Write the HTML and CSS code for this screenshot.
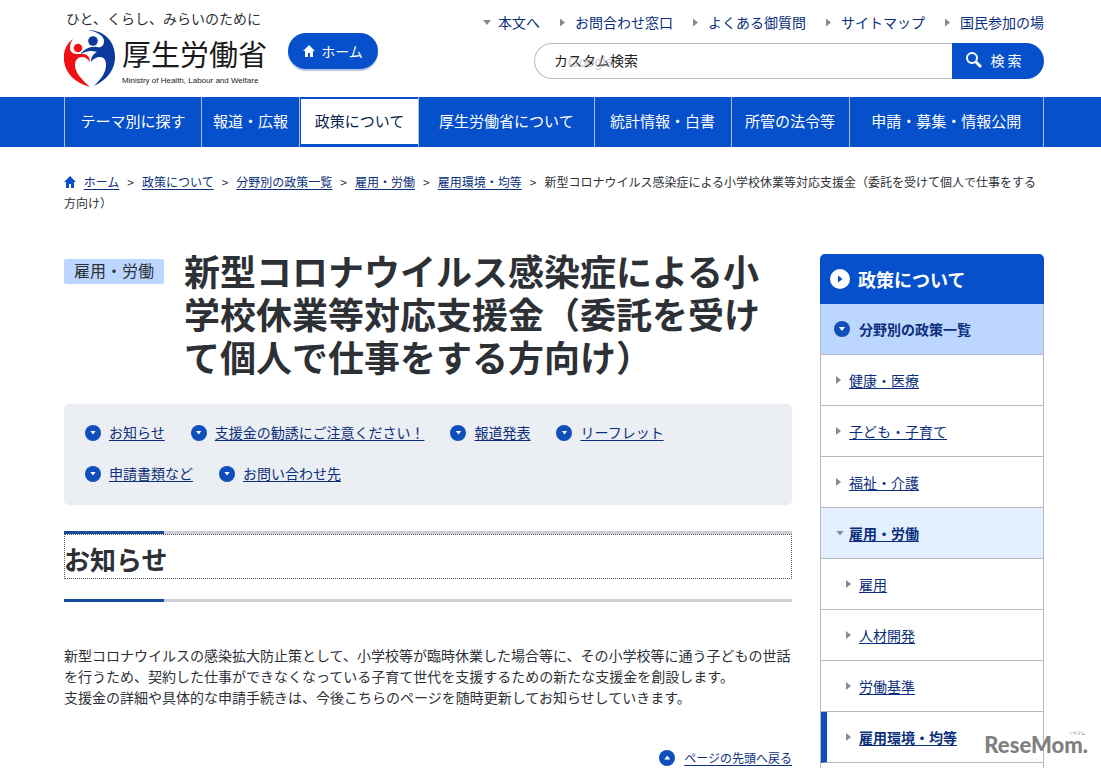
FILE: index.html
```html
<!DOCTYPE html>
<html lang="ja">
<head>
	<meta charset="utf-8">
	<meta name="viewport" content="width=device-width, initial-scale=1">
	<title>新型コロナウイルス感染症による小学校休業等対応支援金｜厚生労働省</title>

	<link rel="stylesheet" href="styles.css">
</head>
<body>
	<header class="header">
		<div class="brand">
			<p class="tagline">ひと、くらし、みらいのために</p>
			<a class="logo" href="#">
				<svg class="logo-mark" viewBox="0 0 52 58" aria-hidden="true">
					<circle cx="14" cy="18" r="4.3" fill="#f00f14"/>
					<path fill="#f00f14" d="M9 9C2 14-1 22 0 31c2 13 10 21 26 26C17 49 11 42 11 35c0-5 3-8 7-8 3 0 6 2 8 5 0-5-3-8-7-8h-5c-5 0-8-2-8-6 0-4 1-6 3-9z"/>
					<circle cx="29" cy="11" r="4.8" fill="#0a3a9c"/>
					<path fill="#0a3a9c" d="M24 0C38 0 50 9 51 25c1 14-8 25-21 31 8-8 12-14 12-21 0-5-2-8-6-8-4 0-7 2-9 5 0-5 2-8 6-10-6-2-12-1-17 3 4-6 10-9 17-8 4 1 7-1 7-6 0-5-6-9-16-11z"/>
				</svg>
				<span class="logo-text">
					<span class="logo-name">厚生労働省</span>
					<span class="logo-en">Ministry of Health, Labour and Welfare</span>
				</span>
			</a>
		</div>
		<a class="home-button" href="#">
			<svg class="icon-home" viewBox="0 0 12 12" aria-hidden="true"><path fill="currentColor" d="M6 0 0 6h2v6h3V8h2v4h3V6h2z"/></svg>
			ホーム
		</a>
		<div class="header-side">
			<ul class="utility">
				<li><a class="arrow-down" href="#main">本文へ</a></li>
				<li><a class="arrow" href="#">お問合わせ窓口</a></li>
				<li><a class="arrow" href="#">よくある御質問</a></li>
				<li><a class="arrow" href="#">サイトマップ</a></li>
				<li><a class="arrow" href="#">国民参加の場</a></li>
			</ul>
			<form class="search">
				<div class="search-field">
					<input type="text" value="カスタム検索" aria-label="カスタム検索">
					<span class="search-provider" aria-hidden="true">Google</span>
				</div>
				<button type="button">
					<svg class="icon-search" viewBox="0 0 16 16" aria-hidden="true"><circle cx="6" cy="6" r="5" fill="none" stroke="currentColor" stroke-width="2"/><path d="m10 10 5 5" stroke="currentColor" stroke-width="3"/></svg>
					検 索
				</button>
			</form>
		</div>
	</header>

	<nav class="global-nav">
		<ul>
			<li class="wide"><a href="#">テーマ別に探す</a></li>
			<li class="narrow"><a href="#">報道・広報</a></li>
			<li class="current"><a href="#">政策について</a></li>
			<li class="wider"><a href="#">厚生労働省について</a></li>
			<li class="wide"><a href="#">統計情報・白書</a></li>
			<li><a href="#">所管の法令等</a></li>
			<li class="widest"><a href="#">申請・募集・情報公開</a></li>
		</ul>
	</nav>

	<div class="breadcrumb">
		<svg class="icon-home" viewBox="0 0 12 12" aria-hidden="true"><path fill="currentColor" d="M6 0 0 6h2v6h3V8h2v4h3V6h2z"/></svg>
		<a href="#">ホーム</a><span class="sep">&gt;</span><a href="#">政策について</a><span class="sep">&gt;</span><a href="#">分野別の政策一覧</a><span class="sep">&gt;</span><a href="#">雇用・労働</a><span class="sep">&gt;</span><a href="#">雇用環境・均等</a><span class="sep">&gt;</span>新型コロナウイルス感染症による小学校休業等対応支援金（委託を受けて個人で仕事をする方向け）
	</div>

	<div class="container">
		<main id="main">
			<div class="page-title">
				<p class="category">雇用・労働</p>
				<h1>新型コロナウイルス感染症による小学校休業等対応支援金（委託を受けて個人で仕事をする方向け）</h1>
			</div>

			<ul class="anchors">
				<li><i class="circle down"></i><a href="#news">お知らせ</a></li>
				<li><i class="circle down"></i><a href="#">支援金の勧誘にご注意ください！</a></li>
				<li><i class="circle down"></i><a href="#">報道発表</a></li>
				<li><i class="circle down"></i><a href="#">リーフレット</a></li>
				<li><i class="circle down"></i><a href="#">申請書類など</a></li>
				<li><i class="circle down"></i><a href="#">お問い合わせ先</a></li>
			</ul>

			<div class="section-title">
				<h2 id="news">お知らせ</h2>
			</div>
			<p class="text">新型コロナウイルスの感染拡大防止策として、小学校等が臨時休業した場合等に、その小学校等に通う子どもの世話を行うため、契約した仕事ができなくなっている子育て世代を支援するための新たな支援金を創設します。<br>支援金の詳細や具体的な申請手続きは、今後こちらのページを随時更新してお知らせしていきます。</p>
			<p class="page-top"><i class="circle up"></i><a href="#">ページの先頭へ戻る</a></p>
		</main>

		<aside class="side">
			<h2><i class="circle large"></i>政策について</h2>
			<div class="side-body">
				<h3><i class="circle down"></i>分野別の政策一覧</h3>
				<ul>
					<li><a class="arrow" href="#">健康・医療</a></li>
					<li><a class="arrow" href="#">子ども・子育て</a></li>
					<li><a class="arrow" href="#">福祉・介護</a></li>
					<li class="open"><a class="arrow-down" href="#">雇用・労働</a></li>
					<li class="sub"><a class="arrow" href="#">雇用</a></li>
					<li class="sub"><a class="arrow" href="#">人材開発</a></li>
					<li class="sub"><a class="arrow" href="#">労働基準</a></li>
					<li class="sub active"><a class="arrow" href="#">雇用環境・均等</a></li>
				</ul>
			</div>
		</aside>
	</div>

	<div class="watermark"><small>リセマム</small>ReseMom.</div>
</body>
</html>
```
FILE: styles.css
```css
* {
	margin: 0;
	padding: 0;
	box-sizing: border-box;
}

body {
	position: relative;
	font-family: "Noto Sans CJK JP", sans-serif;
	font-size: 14px;
	line-height: 21px;
	color: #2d3136;
	background: #fff;
}

ul {
	list-style: none;
}

a {
	color: #0b2f7c;
	text-underline-offset: 2px;
}

/* header */
.header {
	display: flex;
	align-items: flex-start;
	height: 97px;
	padding: 8px 57px 0 64px;
}

.tagline {
	padding-left: 2px;
}

.logo {
	display: flex;
	gap: 6px;
	color: #1a1a1a;
	text-decoration: none;
}

.logo-mark {
	width: 52px;
	height: 58px;
	margin-top: 1px;
}

.logo-text {
	display: flex;
	flex-direction: column;
	padding-top: 6px;
}

.logo-name {
	font-size: 29px;
	line-height: 36px;
}

.logo-en {
	font: 8px/20px "Liberation Sans", sans-serif;
	white-space: nowrap;
}

.home-button {
	display: flex;
	align-items: center;
	justify-content: center;
	gap: 6px;
	width: 90px;
	height: 36px;
	margin: 25px 0 0 21px;
	border-radius: 18px;
	color: #fff;
	background: #0650cc;
	box-shadow: 0 2px 1px #b9c6e4;
	text-decoration: none;
}

.icon-home {
	width: 12px;
	height: 12px;
}

.header-side {
	margin-left: auto;
	padding-top: 4px;
}

.utility {
	display: flex;
	justify-content: flex-end;
	gap: 20px;
}

.utility a {
	display: flex;
	align-items: center;
	text-decoration: none;
}

.arrow::before,
.arrow-down::before {
	content: "";
	flex: none;
	background: #858b96;
}

.arrow::before {
	width: 5px;
	height: 8px;
	margin-right: 8px;
	clip-path: polygon(0 0, 100% 50%, 0 100%);
}

.arrow-down::before {
	width: 8px;
	height: 5px;
	margin-right: 5px;
	clip-path: polygon(0 0, 100% 0, 50% 100%);
}

.utility .arrow::before {
	margin-right: 10px;
}

.utility .arrow-down::before {
	margin-right: 7px;
}

.search {
	display: flex;
	width: 510px;
	height: 36px;
	margin-top: 10px;
	margin-left: auto;
}

.search-field {
	position: relative;
	flex: 1;
}

.search input {
	width: 100%;
	height: 36px;
	padding: 0 19px 2px;
	border: 1px solid #b9bcc2;
	border-right: none;
	border-radius: 18px 0 0 18px;
	font: inherit;
	color: #222;
}

.search-provider {
	position: absolute;
	left: 34px;
	top: 9px;
	font: 14px/20px "Liberation Sans", sans-serif;
	color: #aaa;
	opacity: .6;
	pointer-events: none;
}

.search button {
	display: flex;
	align-items: center;
	justify-content: center;
	gap: 8px;
	width: 92px;
	padding: 0 8px 2px 0;
	border: none;
	border-radius: 0 18px 18px 0;
	font: inherit;
	color: #fff;
	background: #0650cc;
}

.icon-search {
	width: 16px;
	height: 16px;
}

/* global navigation */
.global-nav {
	padding: 0 57px 0 64px;
	background: #0650cc;
}

.global-nav ul {
	display: flex;
	border-right: 1px solid #a9bfe8;
}

.global-nav li {
	flex: 118 1 0;
	border-left: 1px solid #a9bfe8;
}

.global-nav .narrow {
	flex-grow: 98;
}

.global-nav .wide {
	flex-grow: 137;
}

.global-nav .wider {
	flex-grow: 176;
}

.global-nav .widest {
	flex-grow: 195;
}

.global-nav a {
	display: block;
	padding: 13px 0 15px;
	font-size: 15px;
	line-height: 22px;
	text-align: center;
	white-space: nowrap;
	color: #fff;
	text-decoration: none;
}

.global-nav .current {
	padding: 2px 0 3px 1px;
}

.global-nav .current a {
	padding: 11px 0 12px;
	color: #0b2350;
	background: #fff;
}

/* breadcrumb */
.breadcrumb {
	padding: 24px 57px 0 64px;
	font-size: 12px;
}

.breadcrumb .icon-home {
	margin-right: 5px;
	color: #0650cc;
	vertical-align: -1px;
}

.sep {
	margin: 0 8px;
}

.container {
	display: flex;
	gap: 28px;
	padding: 39px 57px 0 64px;
}

main {
	flex: 1;
}

.page-title {
	display: flex;
	align-items: flex-start;
	gap: 20px;
}

.category {
	flex: none;
	width: 100px;
	margin-top: 7px;
	padding-bottom: 2px;
	border-radius: 2px;
	font-size: 16px;
	line-height: 23px;
	text-align: center;
	background: #bbd6ff;
}

h1 {
	margin: -3px 0 3px;
	font-size: 36px;
	line-height: 43px;
}

.anchors {
	display: flex;
	flex-wrap: wrap;
	gap: 20px 26px;
	margin-top: 23px;
	padding: 18px 20px 21px 21px;
	border-radius: 5px;
	background: #ebeef3;
}

.anchors li {
	display: flex;
	align-items: center;
	gap: 8px;
}

.circle {
	display: inline-flex;
	flex: none;
	align-items: center;
	justify-content: center;
	width: 16px;
	height: 16px;
	border-radius: 50%;
	background: #0f4fbc;
}

.circle::before {
	content: "";
	width: 6px;
	height: 4px;
	background: #fff;
}

.circle.down::before {
	clip-path: polygon(0 0, 100% 0, 50% 100%);
}

.circle.up::before {
	clip-path: polygon(50% 0, 100% 100%, 0 100%);
}

.circle.large {
	width: 20px;
	height: 20px;
	background: #fff;
}

.circle.large::before {
	width: 5px;
	height: 8px;
	background: #0650cc;
	clip-path: polygon(0 0, 100% 50%, 0 100%);
}

.section-title {
	margin-top: 26px;
}

.section-title::before,
.section-title::after {
	content: "";
	display: block;
	height: 3px;
	background: linear-gradient(#174a9f, #174a9f) 0 0 / 100px 3px no-repeat #cdced6;
}

.section-title h2 {
	margin-bottom: 20px;
	border: 1px dotted #555;
	padding: 7px 0 3px;
	font-size: 26px;
	line-height: 33px;
	text-indent: -1px;
}

.text {
	margin-top: 43px;
}

.page-top {
	display: flex;
	align-items: center;
	justify-content: flex-end;
	gap: 9px;
	margin-top: 39px;
	font-size: 12px;
}

/* side menu */
.side {
	flex: none;
	width: 224px;
	margin-top: 2px;
}

.side h2 {
	display: flex;
	align-items: center;
	gap: 8px;
	height: 50px;
	padding-left: 10px;
	border-radius: 5px 5px 0 0;
	font-size: 18px;
	color: #fff;
	background: #0650cc;
}

.side-body {
	padding-bottom: 5px;
	border: 1px solid #b5b9c0;
	border-width: 0 1px;
}

.side h3 {
	display: flex;
	align-items: center;
	gap: 9px;
	height: 51px;
	padding-left: 13px;
	border-bottom: 1px solid #b5b9c0;
	font-size: 14px;
	color: #0b2f7c;
	background: #bbd6ff;
}

.side li a {
	display: flex;
	align-items: center;
	height: 51px;
	padding-left: 15px;
	border-bottom: 1px solid #b5b9c0;
}

.side .sub a {
	padding-left: 25px;
}

.side .open a {
	font-weight: bold;
	background: #e4f0ff;
}

.side .active a {
	padding-left: 19px;
	border-left: 6px solid #0f4fbc;
	font-weight: bold;
}

.watermark {
	position: absolute;
	right: 13px;
	bottom: 9px;
	font: 900 22px/28px Lato, sans-serif;
	color: #808080;
}

.watermark small {
	position: absolute;
	right: 3px;
	top: -1px;
	font: 4px/6px "Noto Sans CJK JP", sans-serif;
}
```
